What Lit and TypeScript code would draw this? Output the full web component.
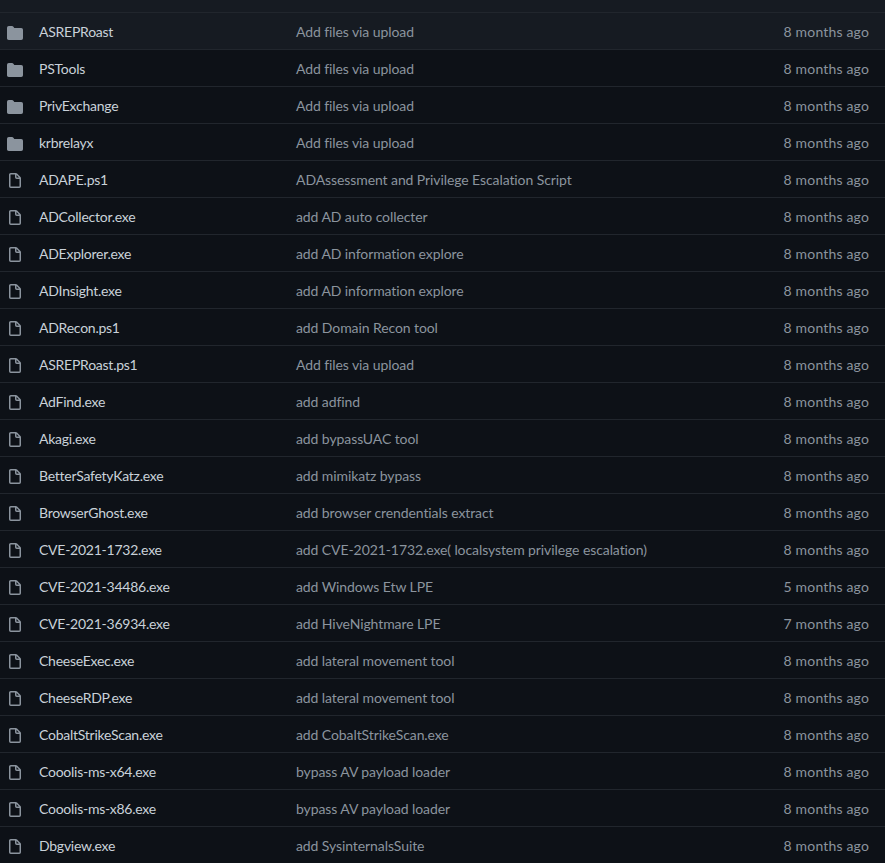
import { LitElement, css, html } from 'lit';
import { customElement } from 'lit/decorators.js';

type Entry = { name: string; msg: string; age: string; dir?: boolean; hover?: boolean };

const M8 = '8 months ago';

const ENTRIES: Entry[] = [
  { name: 'ASREPRoast', msg: 'Add files via upload', age: M8, dir: true, hover: true },
  { name: 'PSTools', msg: 'Add files via upload', age: M8, dir: true },
  { name: 'PrivExchange', msg: 'Add files via upload', age: M8, dir: true },
  { name: 'krbrelayx', msg: 'Add files via upload', age: M8, dir: true },
  { name: 'ADAPE.ps1', msg: 'ADAssessment and Privilege Escalation Script', age: M8 },
  { name: 'ADCollector.exe', msg: 'add AD auto collecter', age: M8 },
  { name: 'ADExplorer.exe', msg: 'add AD information explore', age: M8 },
  { name: 'ADInsight.exe', msg: 'add AD information explore', age: M8 },
  { name: 'ADRecon.ps1', msg: 'add Domain Recon tool', age: M8 },
  { name: 'ASREPRoast.ps1', msg: 'Add files via upload', age: M8 },
  { name: 'AdFind.exe', msg: 'add adfind', age: M8 },
  { name: 'Akagi.exe', msg: 'add bypassUAC tool', age: M8 },
  { name: 'BetterSafetyKatz.exe', msg: 'add mimikatz bypass', age: M8 },
  { name: 'BrowserGhost.exe', msg: 'add browser crendentials extract', age: M8 },
  { name: 'CVE-2021-1732.exe', msg: 'add CVE-2021-1732.exe( localsystem privilege escalation)', age: M8 },
  { name: 'CVE-2021-34486.exe', msg: 'add Windows Etw LPE', age: '5 months ago' },
  { name: 'CVE-2021-36934.exe', msg: 'add HiveNightmare LPE', age: '7 months ago' },
  { name: 'CheeseExec.exe', msg: 'add lateral movement tool', age: M8 },
  { name: 'CheeseRDP.exe', msg: 'add lateral movement tool', age: M8 },
  { name: 'CobaltStrikeScan.exe', msg: 'add CobaltStrikeScan.exe', age: M8 },
  { name: 'Cooolis-ms-x64.exe', msg: 'bypass AV payload loader', age: M8 },
  { name: 'Cooolis-ms-x86.exe', msg: 'bypass AV payload loader', age: M8 },
  { name: 'Dbgview.exe', msg: 'add SysinternalsSuite', age: M8 },
];

const folderIcon = html`<svg class="icon" viewBox="0 0 16 16" width="16" height="16" aria-hidden="true">
  <path d="M1.75 1A1.75 1.75 0 000 2.75v10.5C0 14.216.784 15 1.75 15h12.5A1.75 1.75 0 0016 13.25v-8.5A1.75 1.75 0 0014.25 3H7.5a.25.25 0 01-.2-.1l-.9-1.2C6.07 1.26 5.55 1 5 1H1.75z"></path>
</svg>`;

const fileIcon = html`<svg class="icon" viewBox="0 0 16 16" width="16" height="16" aria-hidden="true">
  <path fill-rule="evenodd" d="M3.75 1.5a.25.25 0 00-.25.25v11.5c0 .138.112.25.25.25h8.5a.25.25 0 00.25-.25V6H9.75A1.75 1.75 0 018 4.25V1.5H3.75zm5.75.56v2.19c0 .138.112.25.25.25h2.19L9.5 2.06zM2 1.75C2 .784 2.784 0 3.75 0h5.086c.464 0 .909.184 1.237.513l3.414 3.414c.329.328.513.773.513 1.237v8.086A1.75 1.75 0 0112.25 15h-8.5A1.75 1.75 0 012 13.25V1.75z"></path>
</svg>`;

@customElement('app-root')
export class AppRoot extends LitElement {
  static styles = css`
    :host {
      display: block;
      height: 863px;
      overflow: hidden;
      background: #0d1117;
      font-family: Lato, 'Noto Sans', sans-serif;
      font-size: 14px;
    }

    .top {
      height: 12px;
      background: #161b22;
    }

    .row {
      display: grid;
      grid-template-columns: 16px 241px 1fr auto;
      column-gap: 16px;
      align-items: center;
      box-sizing: border-box;
      height: 37px;
      padding: 2px 16px 0 7px;
      border-top: 1px solid #21262d;
      line-height: 20px;
      white-space: nowrap;
    }

    .row.hover {
      background: #161b22;
    }

    .icon {
      display: block;
      margin-top: 2px;
      fill: #8b949e;
    }

    .name {
      color: #c9d1d9;
      letter-spacing: -0.25px;
    }

    .msg {
      color: #8b949e;
      letter-spacing: -0.09px;
    }

    .age {
      color: #8b949e;
      letter-spacing: 0.17px;
    }
  `;

  render() {
    return html`
      <div class="top"></div>
      ${ENTRIES.map(
        (e) => html`
          <div class="row ${e.hover ? 'hover' : ''}">
            ${e.dir ? folderIcon : fileIcon}
            <span class="name">${e.name}</span>
            <span class="msg">${e.msg}</span>
            <span class="age">${e.age}</span>
          </div>
        `
      )}
    `;
  }
}
